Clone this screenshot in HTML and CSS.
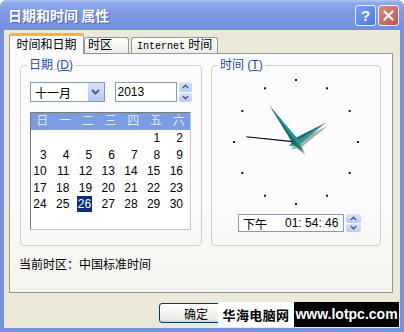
FILE: index.html
```html
<!DOCTYPE html>
<html lang="zh-CN">
<head>
    <meta charset="UTF-8">
    <title>日期和时间 属性</title>
    <link rel="stylesheet" href="styles.css">
</head>
<body>
    <div class="window">
        <div class="titlebar">
            <span class="title">日期和时间 属性</span>
            <div class="caption-buttons">
                <span class="cap-btn help">?</span>
                <span class="cap-btn close">
                    <svg width="11" height="11" viewBox="0 0 11 11"><path d="M1.5 1.5 L9.5 9.5 M9.5 1.5 L1.5 9.5" stroke="#fff" stroke-width="2.2" stroke-linecap="round"/></svg>
                </span>
            </div>
        </div>
        <div class="client">
            <div class="tabs">
                <div class="tab active">时间和日期</div>
                <div class="tab zone-tab">时区</div>
                <div class="tab net-tab"><span class="latin">Internet</span> 时间</div>
            </div>
            <div class="panel">
                <div class="groups">
                    <fieldset class="group date-group">
                        <legend>日期 (<u>D</u>)</legend>
                        <div class="date-row">
                            <div class="select">
                                <span class="select-text">十一月</span>
                                <span class="drop-btn">
                                    <svg width="9" height="6" viewBox="0 0 9 6"><path d="M1 1 L4.5 4.5 L8 1" fill="none" stroke="#4d6185" stroke-width="2"/></svg>
                                </span>
                            </div>
                            <div class="textbox year">2013</div>
                            <div class="spinner">
                                <span class="spin-half"><svg width="7" height="5" viewBox="0 0 7 5"><path d="M0.8 4 L3.5 1.3 L6.2 4" fill="none" stroke="#4d6185" stroke-width="1.6"/></svg></span>
                                <span class="spin-half"><svg width="7" height="5" viewBox="0 0 7 5"><path d="M0.8 1 L3.5 3.7 L6.2 1" fill="none" stroke="#4d6185" stroke-width="1.6"/></svg></span>
                            </div>
                        </div>
                        <div class="cal">
                            <div class="cal-head">
                                <span>日</span><span>一</span><span>二</span><span>三</span><span>四</span><span>五</span><span>六</span>
                            </div>
                            <div class="cal-days">
                                <span></span><span></span><span></span><span></span><span></span><span>1</span><span>2</span>
                                <span>3</span><span>4</span><span>5</span><span>6</span><span>7</span><span>8</span><span>9</span>
                                <span>10</span><span>11</span><span>12</span><span>13</span><span>14</span><span>15</span><span>16</span>
                                <span>17</span><span>18</span><span>19</span><span>20</span><span>21</span><span>22</span><span>23</span>
                                <span>24</span><span>25</span><span><b class="sel">26</b></span><span>27</span><span>28</span><span>29</span><span>30</span>
                            </div>
                        </div>
                    </fieldset>
                    <fieldset class="group time-group">
                        <legend>时间 (<u>T</u>)</legend>
                        <svg class="clock" width="140" height="140" viewBox="0 0 140 140">
                            <g fill="#1a1a1a">
                                <rect x="69" y="7" width="2" height="2"/>
                                <rect x="100" y="15.3" width="2" height="2"/>
                                <rect x="122.7" y="38" width="2" height="2"/>
                                <rect x="131" y="69" width="2" height="2"/>
                                <rect x="122.7" y="100" width="2" height="2"/>
                                <rect x="100" y="122.7" width="2" height="2"/>
                                <rect x="69" y="131" width="2" height="2"/>
                                <rect x="38" y="122.7" width="2" height="2"/>
                                <rect x="15.3" y="100" width="2" height="2"/>
                                <rect x="7" y="69" width="2" height="2"/>
                                <rect x="15.3" y="38" width="2" height="2"/>
                                <rect x="38" y="15.3" width="2" height="2"/>
                            </g>
                            <g transform="translate(70 70)">
                                <g transform="translate(2 3)" fill="#a3adac">
                                    <polygon transform="rotate(57)" points="0,-36 4,0 0,8 -4,0"/>
                                    <polygon transform="rotate(324)" points="0,-46 3.5,0 0,12 -3.5,0"/>
                                </g>
                                <line transform="rotate(276)" x1="0" y1="4" x2="0" y2="-50" stroke="#000" stroke-width="1.2"/>
                                <g transform="rotate(57)">
                                    <polygon points="0,-36 4,0 0,8" fill="#2a9492"/>
                                    <polygon points="0,-36 -4,0 0,8" fill="#0b6f6e"/>
                                </g>
                                <g transform="rotate(324)">
                                    <polygon points="0,-46 3.5,0 0,12" fill="#2a9492"/>
                                    <polygon points="0,-46 -3.5,0 0,12" fill="#0b6f6e"/>
                                </g>
                            </g>
                        </svg>
                        <div class="time-row">
                            <div class="textbox time-box">
                                <span>下午</span>
                                <span class="digits">01: 54: 46</span>
                            </div>
                            <div class="spinner time-spin">
                                <span class="spin-half"><svg width="7" height="5" viewBox="0 0 7 5"><path d="M0.8 4 L3.5 1.3 L6.2 4" fill="none" stroke="#4d6185" stroke-width="1.6"/></svg></span>
                                <span class="spin-half"><svg width="7" height="5" viewBox="0 0 7 5"><path d="M0.8 1 L3.5 3.7 L6.2 1" fill="none" stroke="#4d6185" stroke-width="1.6"/></svg></span>
                            </div>
                        </div>
                    </fieldset>
                </div>
                <p class="zone">当前时区：中国标准时间</p>
            </div>
            <div class="buttons">
                <button class="btn"><span class="btn-label">确定</span></button>
                <div class="watermark">
                    <span class="wm-cn">华海电脑网</span>
                    <span class="wm-url">www.lotpc.com</span>
                </div>
            </div>
        </div>
    </div>
</body>
</html>
```

FILE: styles.css
```css
body {
    margin: 0;
    background-color: #fff;
    font-family: "Liberation Sans", "Noto Sans CJK SC", sans-serif;
    font-size: 12px;
}

.window {
    width: 404px;
    height: 332px;
    display: flex;
    flex-direction: column;
    background-color: #7591e0;
    border-radius: 7px 7px 0 0;
    overflow: hidden;
}

.titlebar {
    height: 30px;
    flex: none;
    display: flex;
    align-items: center;
    justify-content: space-between;
    padding: 0 5px 0 8px;
    background: linear-gradient(#b3c6f3 0, #8ea8ec 3px, #7d99e5 45%, #7390e1 100%);
}

.title {
    color: #fff;
    font-family: "Noto Sans CJK SC", sans-serif;
    font-size: 14px;
    font-weight: bold;
    text-shadow: 1px 1px 0 #4a64b8;
}

.caption-buttons {
    display: flex;
    gap: 2px;
    margin-top: 1px;
}

.cap-btn {
    width: 19px;
    height: 19px;
    border: 1px solid #f2f4fb;
    border-radius: 3px;
    display: flex;
    align-items: center;
    justify-content: center;
    color: #fff;
    font-weight: bold;
    font-size: 15px;
}

.help {
    background: linear-gradient(135deg, #7ea2f0, #4a78e2);
}

.close {
    background: linear-gradient(135deg, #d98a80, #c0584e);
}

.client {
    flex: 1;
    margin: 0 4px 4px;
    padding: 3px 7px 0 5px;
    background-color: #ece9d8;
    display: flex;
    flex-direction: column;
}

.tabs {
    display: flex;
    align-items: flex-end;
    height: 20px;
}

.tab {
    height: 15px;
    line-height: 15px;
    border: 1px solid #919b9c;
    border-bottom: none;
    border-radius: 3px 3px 0 0;
    background: linear-gradient(#fff, #ecebe6);
    color: #000;
}

.tab.active {
    width: 73px;
    height: 18px;
    line-height: 19px;
    margin-bottom: -1px;
    border-top: 3px solid #f5b33c;
    background: #fcfcfe;
    text-align: center;
    position: relative;
    z-index: 1;
}

.zone-tab {
    width: 40px;
    padding-left: 3px;
}

.net-tab {
    width: 80px;
    padding-left: 5px;
    margin-left: 2px;
}

.latin {
    font-family: "Liberation Mono", monospace;
    font-size: 10px;
}

.panel {
    height: 240px;
    box-sizing: border-box;
    border: 1px solid #919b9c;
    background: linear-gradient(#fcfcfe 60%, #f4f3ee);
    padding: 4px 10px 0 10px;
}

.groups {
    display: flex;
    gap: 9px;
}

.group {
    margin: 0;
    border: 1px solid #d0d0bf;
    border-radius: 4px;
    min-width: 0;
    box-sizing: border-box;
}

.group legend {
    padding: 0 2px;
    font-size: 12px;
    line-height: 14px;
    color: #1c4fa8;
}

.date-group {
    width: 182px;
    padding: 0 9px 15px;
}

.date-group legend {
    margin-left: -3px;
}

.time-group {
    width: 170px;
    padding: 0 0 13px;
}

.time-group legend {
    margin-left: 6px;
}

.date-row {
    display: flex;
    margin-top: 10px;
    height: 20px;
}

.select {
    width: 75px;
    box-sizing: border-box;
    border: 1px solid #7f9db9;
    background: #fff;
    display: flex;
    align-items: center;
    justify-content: space-between;
    padding: 0 0 0 4px;
}

.drop-btn {
    width: 16px;
    height: 18px;
    background: linear-gradient(#d6e2fc, #b6c9f6);
    border-left: 1px solid #fff;
    display: flex;
    align-items: center;
    justify-content: center;
}

.textbox {
    box-sizing: border-box;
    border: 1px solid #7f9db9;
    background: #fff;
}

.year {
    width: 63px;
    margin-left: 10px;
    padding: 2px 0 0 2px;
}

.spinner {
    width: 13px;
    margin-left: 2px;
    display: flex;
    flex-direction: column;
    gap: 1px;
}

.spin-half {
    flex: 1;
    background: linear-gradient(#d9e4fc, #b8cbf6);
    border-radius: 2px;
    display: flex;
    align-items: center;
    justify-content: center;
}

.cal {
    width: 161px;
    height: 118px;
    margin-top: 10px;
    box-sizing: border-box;
    border: 1px solid;
    border-color: #7a7a7a #c9c9c9 #c9c9c9 #7a7a7a;
    background: #fff;
}

.cal-head {
    display: grid;
    grid-template-columns: repeat(7, 1fr);
    height: 17px;
    line-height: 17px;
    background: #7b9be2;
    color: #e2e9fa;
    text-align: center;
}

.cal-days {
    display: grid;
    grid-template-columns: repeat(7, 1fr);
    grid-auto-rows: 16.5px;
    line-height: 16.5px;
    text-align: right;
}

.cal-days span {
    padding-right: 7px;
}

.sel {
    font-weight: normal;
    background: #0c3073;
    color: #fff;
    padding: 1px 1px;
}

.clock {
    display: block;
    margin: 0 auto;
}

.time-row {
    display: flex;
    margin-top: 2px;
    padding-left: 26px;
    height: 18px;
}

.time-box {
    width: 106px;
    display: flex;
    align-items: center;
    padding-left: 4px;
    gap: 18px;
}

.time-spin {
    width: 15px;
}

.zone {
    margin: 12px 0 0 -1px;
    line-height: 14px;
}

.buttons {
    position: relative;
    display: flex;
    margin-top: 10px;
    padding-left: 150px;
}

.btn {
    width: 75px;
    height: 20px;
    padding: 0;
    border: 1px solid #003c74;
    border-radius: 3px;
    background: linear-gradient(#fff, #ecebe6 85%, #d6d0c5);
    font-family: "Liberation Sans", "Noto Sans CJK SC", sans-serif;
    font-size: 12px;
    color: #000;
    text-align: left;
}

.btn-label {
    padding-left: 24px;
}

.watermark {
    position: absolute;
    left: 209px;
    top: -1px;
    height: 25px;
    display: flex;
}

.wm-cn {
    width: 76px;
    background: #fff;
    color: #000;
    font-family: "Noto Sans CJK SC", sans-serif;
    font-weight: bold;
    font-size: 13px;
    line-height: 25px;
    letter-spacing: 0.4px;
    text-align: center;
}

.wm-url {
    width: 105px;
    background: #000;
    color: #fff;
    font-family: "Liberation Sans", sans-serif;
    font-weight: bold;
    font-size: 14px;
    line-height: 25px;
    text-align: center;
}
```
